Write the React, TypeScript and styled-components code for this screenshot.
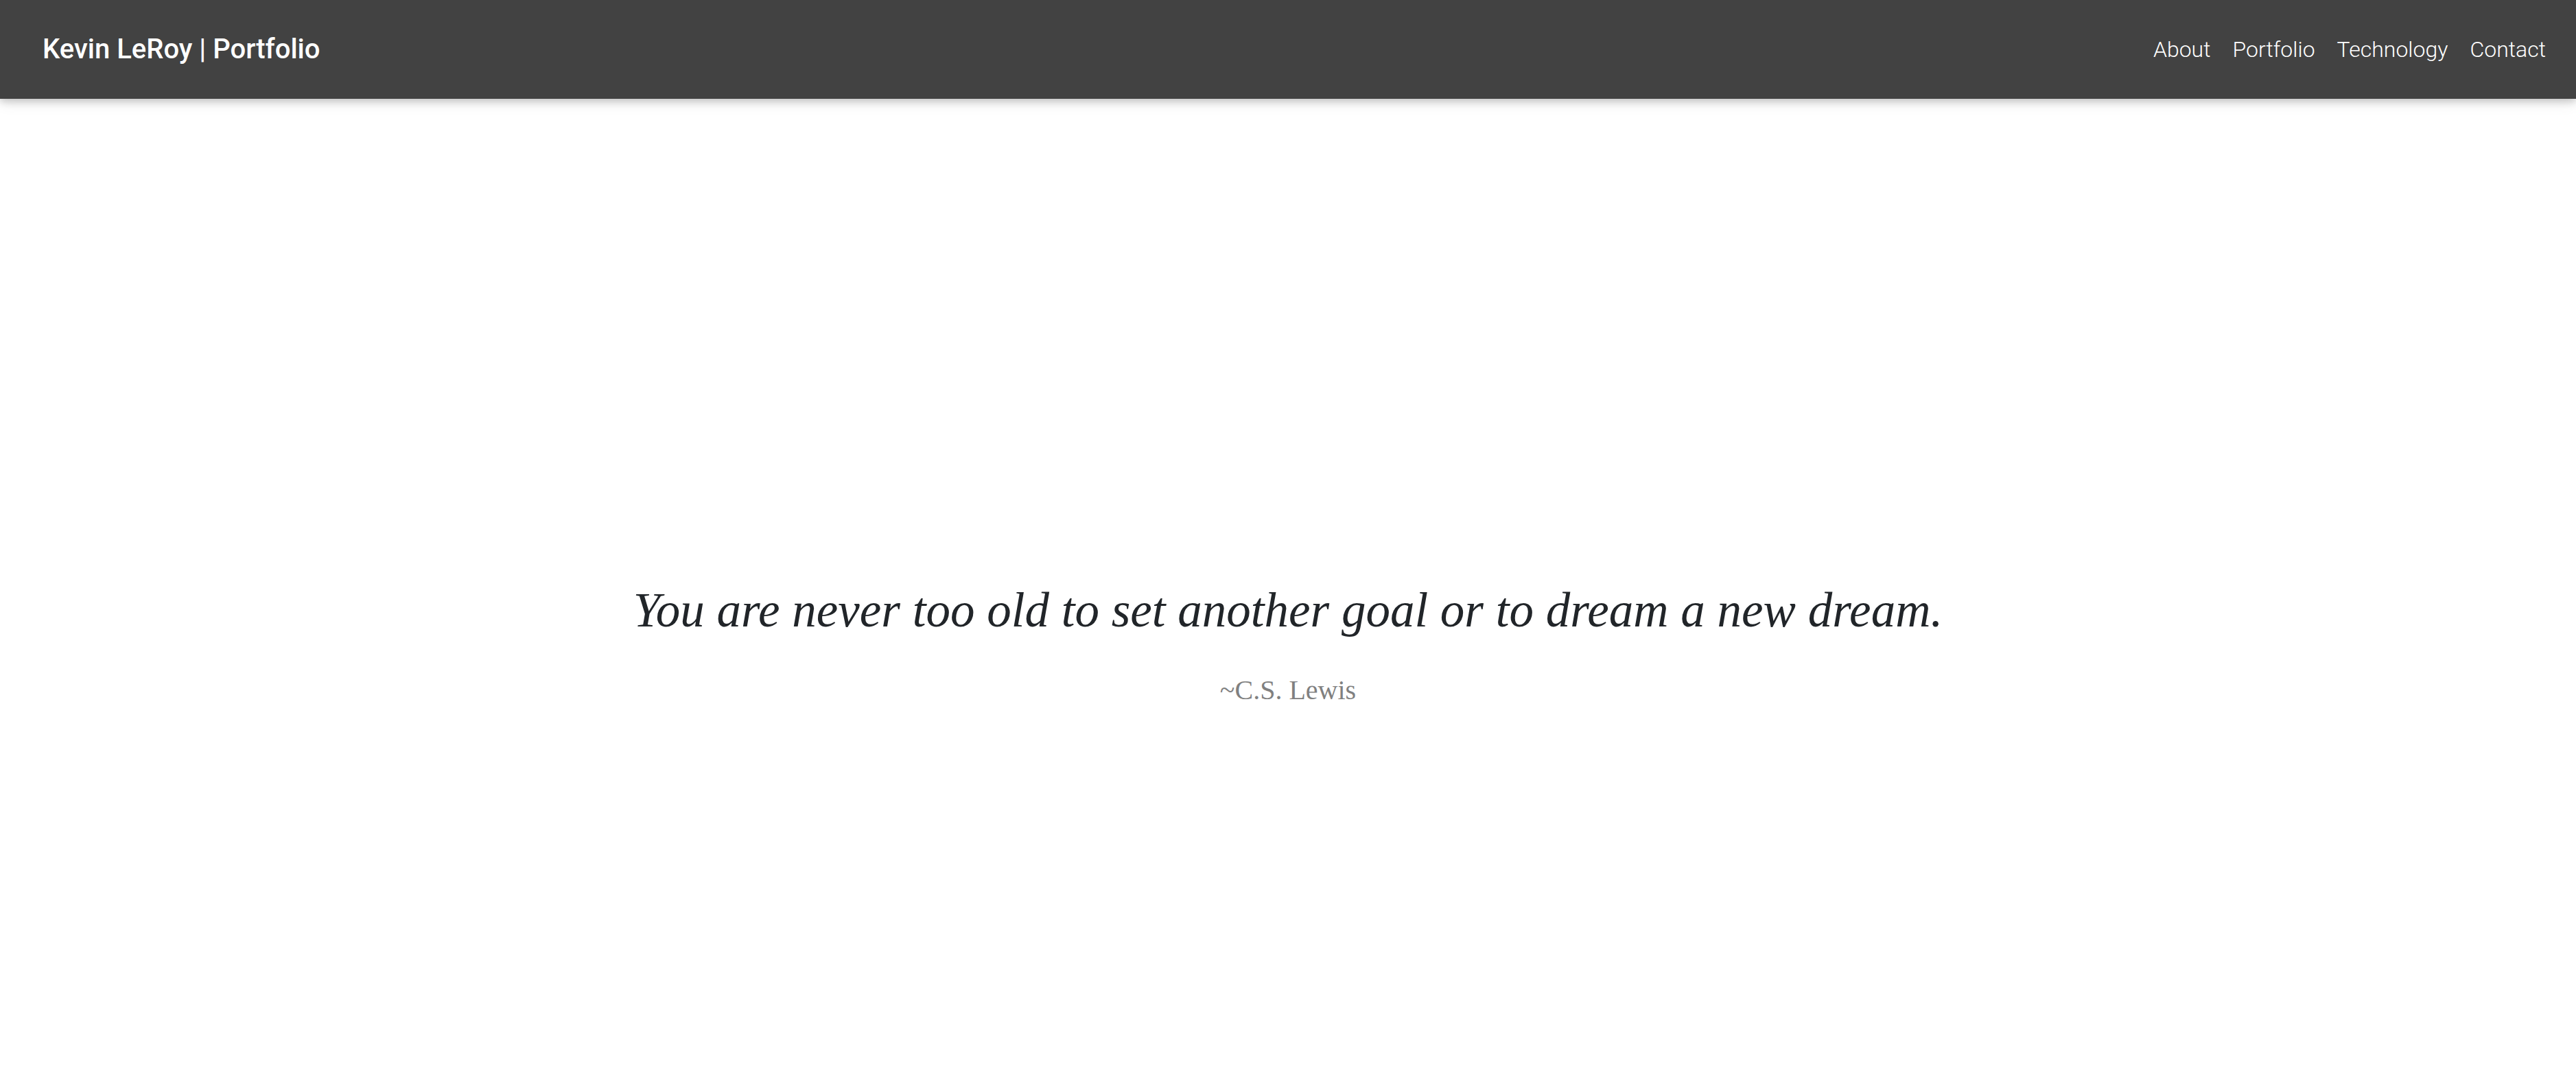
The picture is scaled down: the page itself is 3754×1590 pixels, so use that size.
import React from "react";
import styled, { createGlobalStyle } from "styled-components";

const GlobalStyle = createGlobalStyle`
  *, *::before, *::after { box-sizing: border-box; }
  html, body, #root { height: 100%; }
  body {
    margin: 0;
    background: #fff;
    color: #212529;
    font-family: Roboto, "Liberation Sans", sans-serif;
  }
`;

const Page = styled.div`
  display: flex;
  flex-direction: column;
  min-height: 100%;
`;

const Header = styled.header`
  display: flex;
  align-items: center;
  justify-content: space-between;
  gap: 32px;
  padding: 48px 44px 48px 62px;
  background: #424242;
  box-shadow: 0 4px 10px rgba(0, 0, 0, 0.16), 0 4px 20px rgba(0, 0, 0, 0.12);
`;

const Brand = styled.a`
  color: #fff;
  font-size: 40px;
  font-weight: 500;
  line-height: 48px;
  text-decoration: none;
`;

const Nav = styled.nav`
  display: flex;
  gap: 32px;
`;

const NavLink = styled.a`
  color: #fff;
  font-size: 32px;
  font-weight: 300;
  line-height: 48px;
  text-decoration: none;
`;

const Hero = styled.main`
  display: flex;
  flex: 1;
  align-items: center;
  justify-content: center;
  padding: 144px 32px 0;
`;

const Quote = styled.figure`
  display: flex;
  flex-direction: column;
  gap: 40px;
  margin: 0;
  text-align: center;
`;

const QuoteText = styled.blockquote`
  margin: 0;
  font-family: "Liberation Serif", serif;
  font-size: 71px;
  font-style: italic;
  line-height: 94px;
`;

const Author = styled.figcaption`
  color: #808080;
  font-family: "Liberation Serif", serif;
  font-size: 40px;
  line-height: 60px;
`;

const links = ["About", "Portfolio", "Technology", "Contact"];

export default function App() {
  return (
    <Page>
      <GlobalStyle />
      <Header>
        <Brand href="#home">Kevin LeRoy | Portfolio</Brand>
        <Nav aria-label="Main">
          {links.map((label) => (
            <NavLink key={label} href={`#${label.toLowerCase()}`}>
              {label}
            </NavLink>
          ))}
        </Nav>
      </Header>
      <Hero>
        <Quote>
          <QuoteText>
            You are never too old to set another goal or to dream a new dream.
          </QuoteText>
          <Author>~C.S. Lewis</Author>
        </Quote>
      </Hero>
    </Page>
  );
}
